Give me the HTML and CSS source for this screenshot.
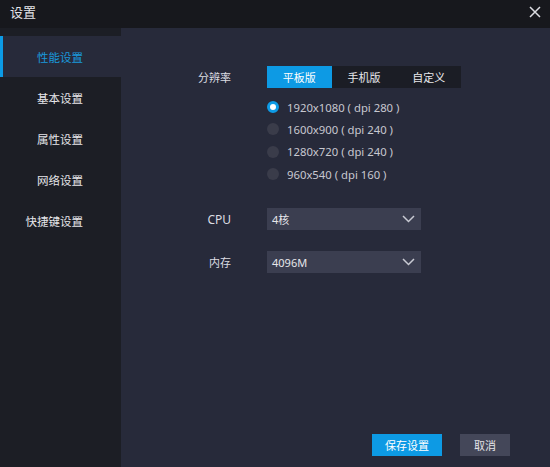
FILE: index.html
```html
<!DOCTYPE html>
<html lang="zh-CN">
<head>
<meta charset="utf-8">
<title>设置</title>
<link rel="stylesheet" href="styles.css">
</head>
<body>
<div class="window">
  <header class="titlebar">
    <span class="title">设置</span>
    <span class="close" aria-label="关闭">
      <svg width="12" height="12" viewBox="0 0 12 12"><path d="M1 1 L11 11 M11 1 L1 11" stroke="#dcdde2" stroke-width="1.5" fill="none"/></svg>
    </span>
  </header>
  <div class="body">
    <nav class="sidebar">
      <div class="nav-item active">性能设置</div>
      <div class="nav-item">基本设置</div>
      <div class="nav-item">属性设置</div>
      <div class="nav-item">网络设置</div>
      <div class="nav-item">快捷键设置</div>
    </nav>
    <main class="panel">
      <div class="form">
        <div class="label">分辨率</div>
        <div class="tabs">
          <div class="tab selected">平板版</div>
          <div class="tab">手机版</div>
          <div class="tab">自定义</div>
        </div>
        <div></div>
        <div class="radios">
          <div class="radio-row"><span class="radio checked"></span><span>1920x1080 ( dpi 280 )</span></div>
          <div class="radio-row"><span class="radio"></span><span>1600x900 ( dpi 240 )</span></div>
          <div class="radio-row"><span class="radio"></span><span>1280x720 ( dpi 240 )</span></div>
          <div class="radio-row"><span class="radio"></span><span>960x540 ( dpi 160 )</span></div>
        </div>
        <div class="label cpu-label">CPU</div>
        <div class="select cpu-select"><span>4核</span>
          <svg width="13" height="8" viewBox="0 0 13 8"><path d="M1 1 L6.5 6.5 L12 1" stroke="#c9cad3" stroke-width="1.5" fill="none"/></svg>
        </div>
        <div class="label mem-label">内存</div>
        <div class="select mem-select"><span>4096M</span>
          <svg width="13" height="8" viewBox="0 0 13 8"><path d="M1 1 L6.5 6.5 L12 1" stroke="#c9cad3" stroke-width="1.5" fill="none"/></svg>
        </div>
      </div>
      <div class="footer">
        <button class="btn primary">保存设置</button>
        <button class="btn secondary">取消</button>
      </div>
    </main>
  </div>
</div>
</body>
</html>
```
FILE: styles.css
```css
* { box-sizing: border-box; }
html, body { margin: 0; padding: 0; }
body {
  width: 550px;
  height: 467px;
  overflow: hidden;
  font-family: "Noto Sans", "Noto Sans CJK SC", sans-serif;
  background: #272a3a;
}
.window {
  width: 550px;
  height: 467px;
  display: flex;
  flex-direction: column;
}
.titlebar {
  height: 28px;
  flex: none;
  background: #17181d;
  display: flex;
  align-items: center;
  justify-content: space-between;
  padding: 0 9px 4px 10px;
}
.title {
  color: #e4e4e8;
  font-size: 13px;
  font-family: "Noto Sans CJK SC", sans-serif;
  line-height: 16px;
}
.close { display: flex; }
.body {
  flex: 1;
  display: flex;
  min-height: 0;
}
.sidebar {
  width: 121px;
  flex: none;
  background: #1c1e25;
  padding-top: 8px;
}
.nav-item {
  height: 41px;
  display: flex;
  align-items: center;
  justify-content: flex-end;
  padding-right: 38px;
  font-family: "Noto Sans CJK SC", sans-serif;
  font-size: 11.5px;
  color: #e6e6ea;
}
.nav-item.active {
  background: #272a3a;
  color: #1a98da;
  border-left: 3px solid #0c9be6;
}
.panel {
  flex: 1;
  background: #272a3a;
  display: flex;
  flex-direction: column;
  padding-top: 38px;
}
.form {
  display: grid;
  grid-template-columns: 110px 194px;
  column-gap: 36px;
  align-items: center;
}
.label {
  text-align: right;
  color: #dcdde2;
  font-size: 11px;
  font-family: "Noto Sans CJK SC", sans-serif;
}
.cpu-label { margin-top: 23px; font-family: "Noto Sans", sans-serif; font-size: 12px; }
.mem-label { margin-top: 21px; }
.tabs {
  display: flex;
  height: 22px;
  background: #1b1d25;
}
.tab {
  width: 64.7px;
  display: flex;
  align-items: center;
  justify-content: center;
  font-family: "Noto Sans CJK SC", sans-serif;
  font-size: 11px;
  color: #e8e8ec;
}
.tab.selected {
  background: #0d9ae4;
  color: #ffffff;
}
.radios {
  margin-top: 8px;
  display: flex;
  flex-direction: column;
}
.radio-row {
  height: 22.3px;
  display: flex;
  align-items: center;
  gap: 8px;
  color: #c7c8d0;
  font-size: 11.3px;
}
.radio {
  width: 12px;
  height: 12px;
  border-radius: 50%;
  background: #3a3c4a;
  flex: none;
}
.radio.checked {
  background: #ffffff;
  border: 3.5px solid #0e9be6;
}
.select {
  width: 154px;
  height: 22px;
  background: #3b3e50;
  display: flex;
  align-items: center;
  justify-content: space-between;
  padding: 0 6px 0 5px;
  color: #e6e6ea;
  font-size: 11px;
  font-family: "Noto Sans", "Noto Sans CJK SC", sans-serif;
}
.cpu-select { margin-top: 23px; }
.mem-select { margin-top: 21px; }
.footer {
  margin-top: auto;
  display: flex;
  justify-content: flex-end;
  gap: 18px;
  padding: 0 40px 11px 0;
}
.btn {
  height: 22px;
  border: none;
  padding: 0;
  font-family: "Noto Sans CJK SC", sans-serif;
  font-size: 11px;
  color: #ffffff;
}
.btn.primary { width: 70px; background: #0d9ae4; }
.btn.secondary { width: 50px; background: #444759; color: #e4e4e8; }
```
